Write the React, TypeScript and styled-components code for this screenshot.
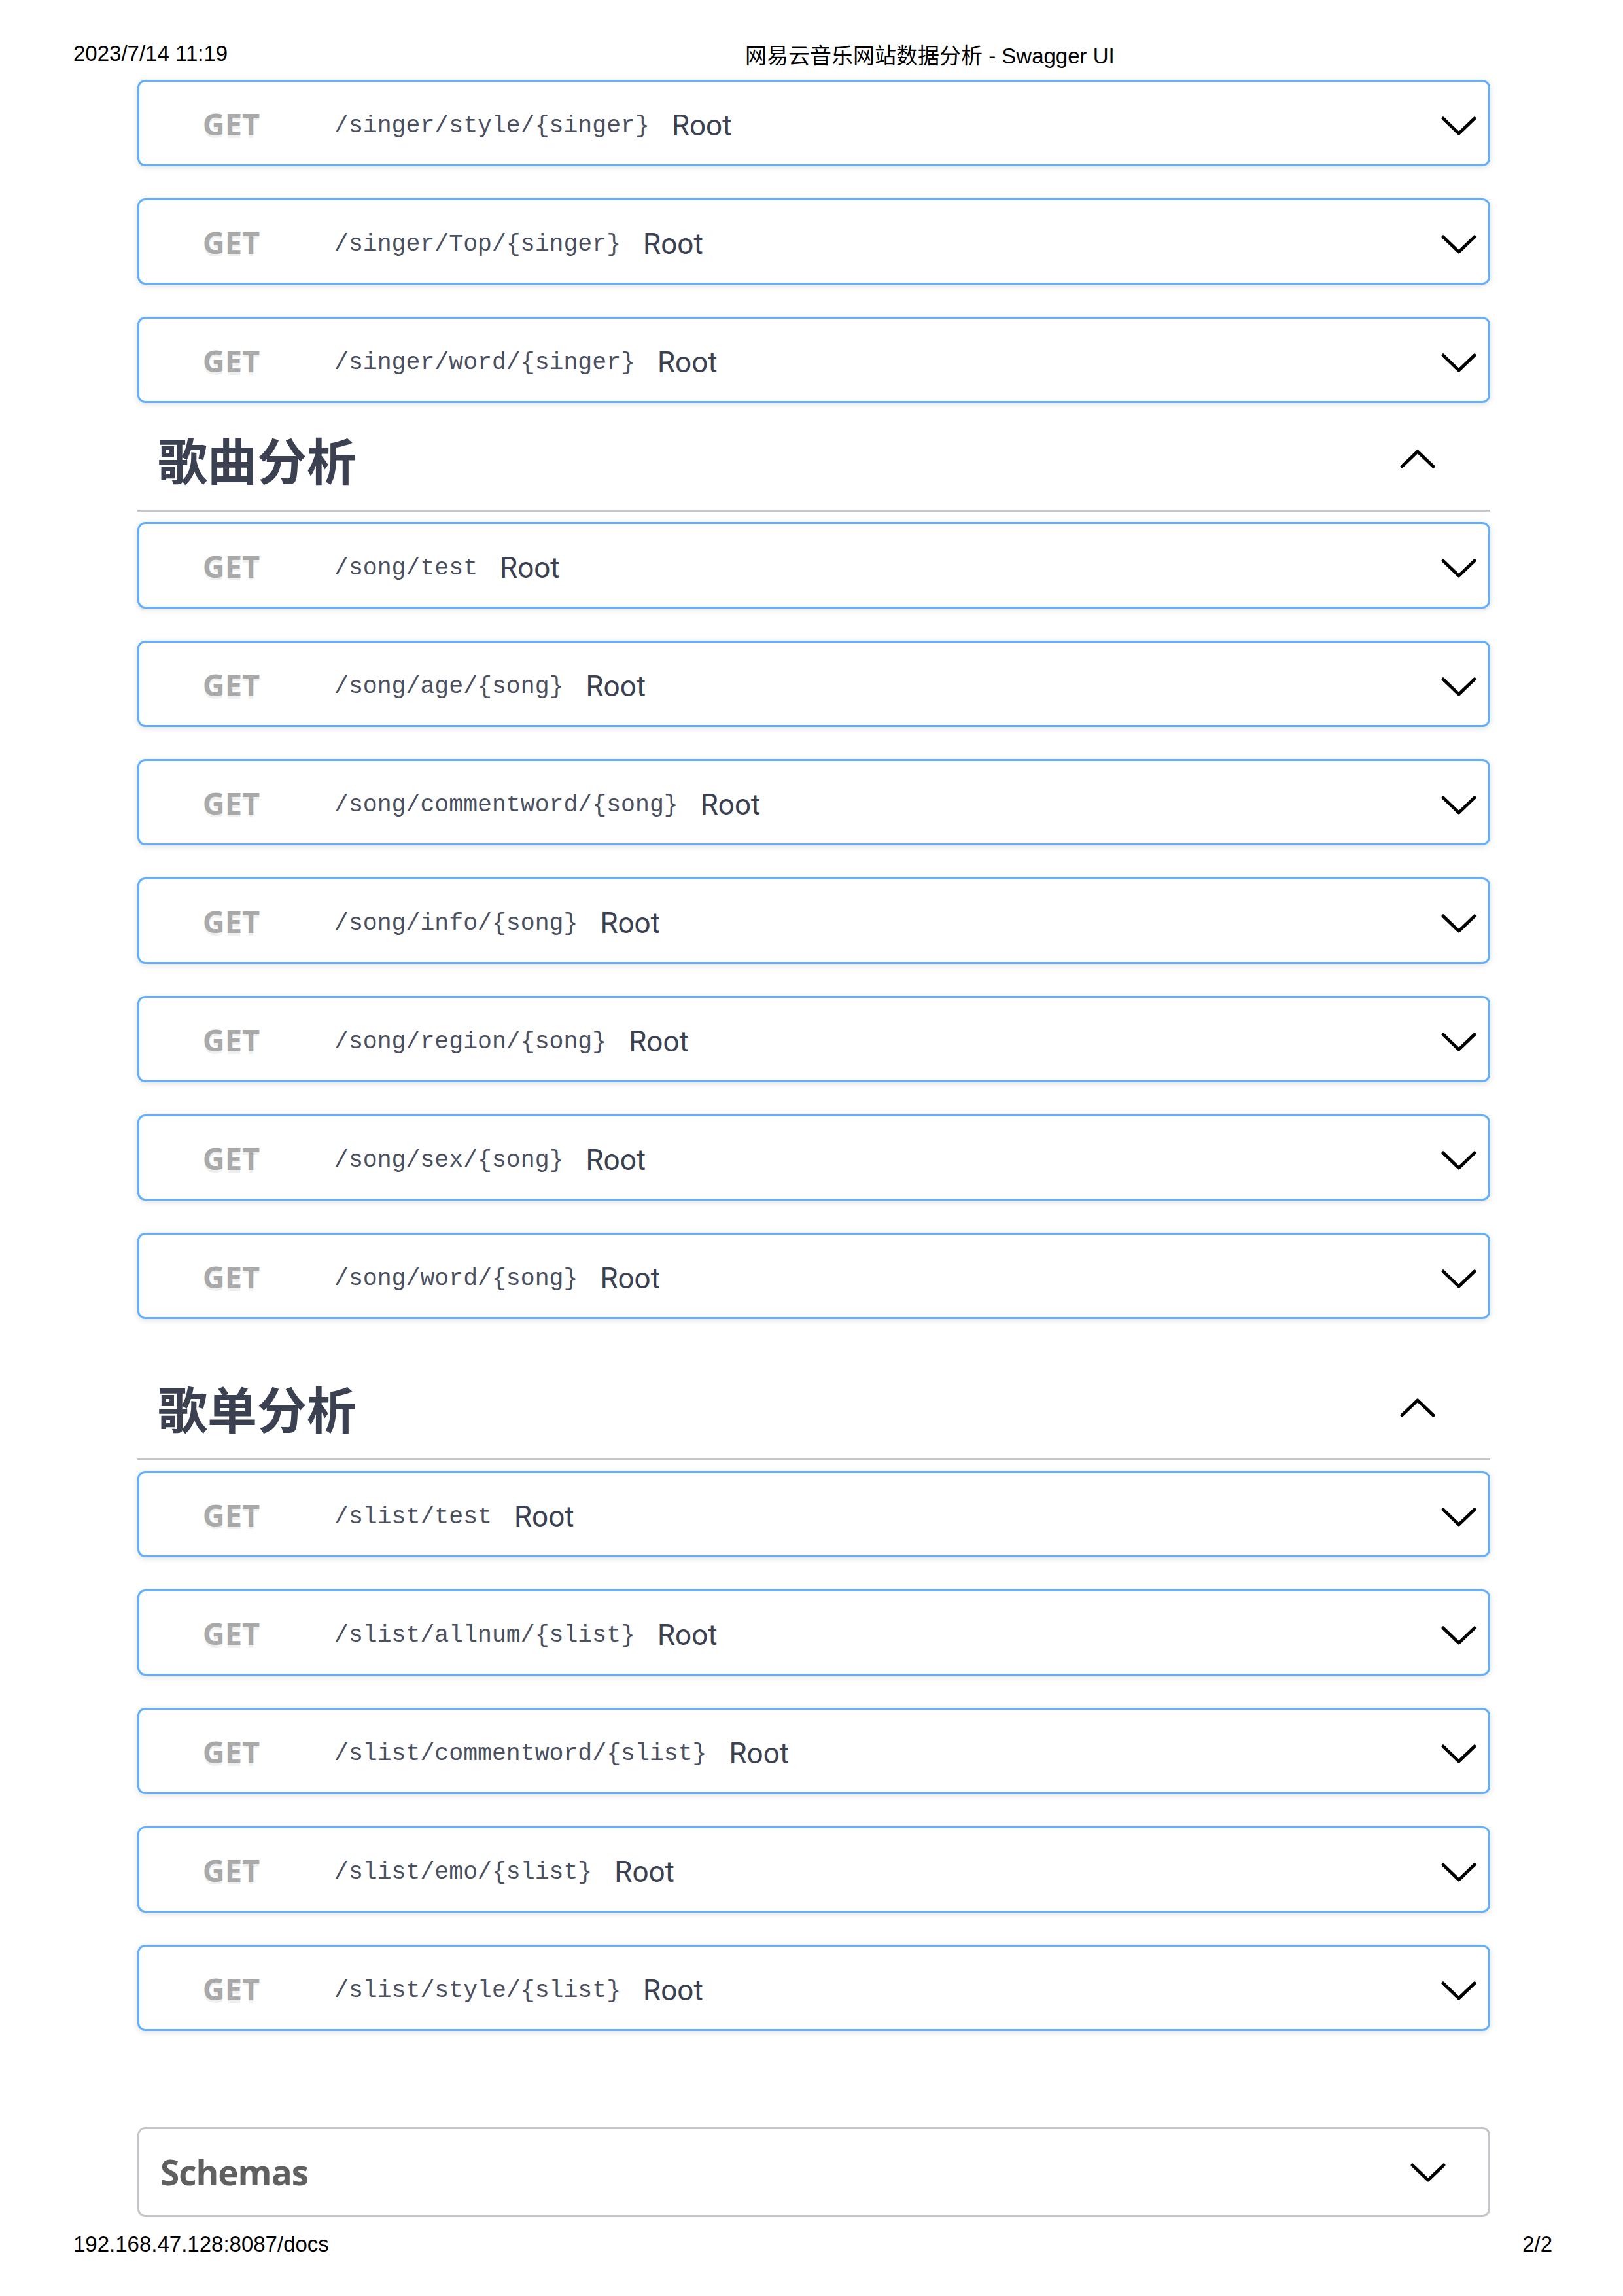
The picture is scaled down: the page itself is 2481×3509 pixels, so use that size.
import React from 'react';
import styled, { createGlobalStyle } from 'styled-components';

type Op = { path: string };

const singerOps: Op[] = [
  { path: '/singer/style/{singer}' },
  { path: '/singer/Top/{singer}' },
  { path: '/singer/word/{singer}' },
];

const songOps: Op[] = [
  { path: '/song/test' },
  { path: '/song/age/{song}' },
  { path: '/song/commentword/{song}' },
  { path: '/song/info/{song}' },
  { path: '/song/region/{song}' },
  { path: '/song/sex/{song}' },
  { path: '/song/word/{song}' },
];

const slistOps: Op[] = [
  { path: '/slist/test' },
  { path: '/slist/allnum/{slist}' },
  { path: '/slist/commentword/{slist}' },
  { path: '/slist/emo/{slist}' },
  { path: '/slist/style/{slist}' },
];

const GlobalStyle = createGlobalStyle`
  html, body {
    margin: 0;
    padding: 0;
    background: #ffffff;
  }
  * {
    box-sizing: border-box;
  }
`;

// chevron drawn as a polyline, rotated for the open sections
const Chevron: React.FC<{ up?: boolean }> = ({ up }) => (
  <ChevronSvg width="56" height="32" viewBox="0 0 56 32" $up={up}>
    <polyline
      points="4,5 28,28 52,5"
      fill="none"
      stroke="#000"
      strokeWidth="5"
      strokeLinecap="round"
      strokeLinejoin="round"
    />
  </ChevronSvg>
);

const OpRow: React.FC<Op> = ({ path }) => (
  <OpBlock>
    <Summary>
      <Method>GET</Method>
      <Path>{path}</Path>
      <Description>Root</Description>
    </Summary>
    <RowChevron>
      <Chevron />
    </RowChevron>
  </OpBlock>
);

const TagSection: React.FC<{ title?: string; ops: Op[]; spaced?: boolean }> = ({
  title,
  ops,
  spaced,
}) => (
  <Section $spaced={spaced}>
    {title && (
      <TagHeader>
        <TagTitle>{title}</TagTitle>
        <Chevron up />
      </TagHeader>
    )}
    <OpList $withHeader={!!title}>
      {ops.map((op) => (
        <OpRow key={op.path} path={op.path} />
      ))}
    </OpList>
  </Section>
);

const App: React.FC = () => {
  return (
    <>
      <GlobalStyle />
      <Page>
        <PrintHeader>
          <span>2023/7/14 11:19</span>
          <PageTitle>网易云音乐网站数据分析 - Swagger UI</PageTitle>
        </PrintHeader>
        <Content>
          <TagSection ops={singerOps} />
          <TagSection title="歌曲分析" ops={songOps} />
          <TagSection title="歌单分析" ops={slistOps} spaced />
          <Models>
            <ModelsTitle>Schemas</ModelsTitle>
            <Chevron />
          </Models>
        </Content>
        <PrintFooter>
          <span>192.168.47.128:8087/docs</span>
          <span>2/2</span>
        </PrintFooter>
      </Page>
    </>
  );
};

export default App;

const Page = styled.div`
  width: 2481px;
  min-height: 3509px;
  display: flex;
  flex-direction: column;
  background: #fff;
`;

const PrintHeader = styled.div`
  display: grid;
  grid-template-columns: 1027px auto;
  height: 122px;
  padding: 62px 0 0 112px;
  font-family: 'Liberation Sans', 'Noto Sans CJK SC', sans-serif;
  font-size: 33px;
  line-height: 40px;
  color: #000;
`;

const PageTitle = styled.span`
  display: block;
  padding-top: 4px;
`;

const PrintFooter = styled.div`
  display: flex;
  justify-content: space-between;
  margin-top: 22px;
  padding: 0 108px 0 112px;
  font-family: 'Liberation Sans', sans-serif;
  font-size: 33px;
  line-height: 40px;
  color: #000;
`;

const Content = styled.div`
  display: flex;
  flex-direction: column;
  padding: 0 203px 0 210px;
`;

const Section = styled.section<{ $spaced?: boolean }>`
  display: flex;
  flex-direction: column;
  margin-top: ${(p) => (p.$spaced ? '50px' : '0')};
`;

const TagHeader = styled.div`
  display: flex;
  align-items: center;
  justify-content: space-between;
  padding: 40px 83px 32px 31px;
  border-bottom: 3px solid #c5c6cb;
`;

const TagTitle = styled.h3`
  margin: 0;
  font-family: 'Noto Sans CJK SC', 'Noto Sans', sans-serif;
  font-size: 76px;
  line-height: 91px;
  font-weight: 700;
  color: #3b4151;
`;

const OpList = styled.div<{ $withHeader?: boolean }>`
  display: flex;
  flex-direction: column;
  gap: 49px;
  margin-top: ${(p) => (p.$withHeader ? '16px' : '0')};
`;

const OpBlock = styled.div`
  display: flex;
  align-items: center;
  height: 132px;
  padding: 0 17px 0 17px;
  border: 3.5px solid #61affe;
  border-radius: 12px;
  background: #fff;
  box-shadow: 0 2px 10px rgba(0, 0, 0, 0.12);
`;

const Summary = styled.div`
  flex: 1;
  padding-top: 6px;
  white-space: nowrap;
  font-family: 'Open Sans', sans-serif;
  font-size: 44px;
  line-height: 60px;
`;

const Method = styled.span`
  display: inline-block;
  width: 247px;
  text-align: center;
  font-family: 'Open Sans', sans-serif;
  font-weight: 700;
  font-size: 47px;
  color: #a9a9a9;
  text-shadow: 0 4px 0 rgba(0, 0, 0, 0.08);
`;

const Path = styled.span`
  padding: 0 34px;
  vertical-align: 5px;
  font-family: 'Liberation Mono', 'DejaVu Sans Mono', monospace;
  font-size: 36.5px;
  color: #4a5060;
`;

const Description = styled.span`
  font-family: Roboto, 'Noto Sans', sans-serif;
  font-size: 44px;
  color: #3b4151;
`;

const RowChevron = styled.div`
  display: flex;
  margin-top: 8px;
`;

const ChevronSvg = styled.svg<{ $up?: boolean }>`
  display: block;
  flex-shrink: 0;
  transform: ${(p) => (p.$up ? 'rotate(180deg)' : 'none')};
`;

const Models = styled.div`
  display: flex;
  align-items: center;
  justify-content: space-between;
  height: 137px;
  margin-top: 147px;
  padding: 0 64px 0 32px;
  border: 3.5px solid #c5c6cb;
  border-radius: 12px;
`;

const ModelsTitle = styled.h4`
  margin: 0;
  font-family: 'Open Sans', sans-serif;
  font-weight: 700;
  font-size: 53px;
  letter-spacing: -1px;
  color: #606060;
`;
